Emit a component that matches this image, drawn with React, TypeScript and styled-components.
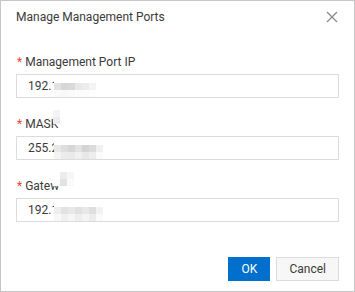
import styled, { createGlobalStyle } from "styled-components"

const GlobalStyle = createGlobalStyle`
  html, body {
    margin: 0;
    padding: 0;
    background: #ffffff;
  }
  body {
    font-family: Roboto, "Liberation Sans", sans-serif;
    color: #3a3a3a;
  }
`

type Field = {
  label: string
  value: string
  labelBlur: number[][]
  valueBlur: number[][]
}

// rough greys for the redacted (pixelated) parts of the screenshot
const fields: Field[] = [
  {
    label: "Management Port IP",
    value: "192.1",
    labelBlur: [],
    valueBlur: [
      [255, 255, 255, 255, 255, 255, 255],
      [226, 214, 218, 232, 236, 244, 255],
      [250, 248, 250, 252, 252, 254, 255],
    ],
  },
  {
    label: "MASK",
    value: "255.2",
    labelBlur: [[244], [236]],
    valueBlur: [
      [255, 255, 255, 255, 255, 255, 255],
      [232, 222, 214, 226, 212, 220, 240],
      [244, 236, 234, 240, 232, 238, 250],
    ],
  },
  {
    label: "Gatew",
    value: "192.1",
    labelBlur: [[255, 236, 246], [252, 226, 250]],
    valueBlur: [
      [255, 255, 255, 255, 255, 255, 255],
      [238, 226, 232, 224, 232, 222, 242],
      [248, 240, 246, 238, 244, 236, 250],
    ],
  },
]

const Mosaic = ({ cells, size = 7 }: { cells: number[][]; size?: number }) => {
  const w = (cells[0]?.length ?? 0) * size
  const h = cells.length * size
  return (
    <svg width={w} height={h} viewBox={`0 0 ${w} ${h}`} style={{ display: "block" }}>
      {cells.map((row, r) =>
        row.map((g, c) => (
          <rect
            key={`${r}-${c}`}
            x={c * size}
            y={r * size}
            width={size}
            height={size}
            fill={`rgb(${g},${g},${g})`}
          />
        ))
      )}
    </svg>
  )
}

export default function App() {
  return (
    <>
      <GlobalStyle />
      <Dialog>
        <Header>
          <Title>Manage Management Ports</Title>
          <CloseButton aria-label="Close">
            <svg width="12" height="12" viewBox="0 0 12 12">
              <path d="M1 1 L11 11 M11 1 L1 11" stroke="#8a8a8a" strokeWidth="1.3" fill="none" />
            </svg>
          </CloseButton>
        </Header>
        <Body>
          {fields.map((f) => (
            <FormItem key={f.label}>
              <Label>
                <Required>*</Required>
                <span>{f.label}</span>
                {f.labelBlur.length > 0 && (
                  <LabelBlur>
                    <Mosaic cells={f.labelBlur} />
                  </LabelBlur>
                )}
              </Label>
              <InputBox>
                <span>{f.value}</span>
                <ValueBlur>
                  <Mosaic cells={f.valueBlur} />
                </ValueBlur>
              </InputBox>
            </FormItem>
          ))}
        </Body>
        <Footer>
          <Button $primary>OK</Button>
          <Button>Cancel</Button>
        </Footer>
      </Dialog>
    </>
  )
}

const Dialog = styled.div`
  box-sizing: border-box;
  width: 355px;
  height: 292px;
  border: 1px solid #c6c6c6;
  background: #ffffff;
  display: flex;
  flex-direction: column;
`

const Header = styled.div`
  display: flex;
  align-items: center;
  justify-content: space-between;
  height: 32px;
  padding: 0 15px;
`

const Title = styled.div`
  font-size: 12px;
  color: #3a3a3a;
`

const CloseButton = styled.button`
  border: none;
  background: none;
  padding: 0;
  width: 12px;
  height: 12px;
  display: flex;
  cursor: pointer;
  margin-right: 1px;
`

const Body = styled.div`
  display: flex;
  flex-direction: column;
  gap: 16px;
  padding: 19px 15px 0;
`

const FormItem = styled.div`
  display: flex;
  flex-direction: column;
  gap: 2px;
`

const Label = styled.div`
  position: relative;
  display: flex;
  align-items: center;
  height: 20px;
  font-size: 12px;
  color: #3a3a3a;
`

const Required = styled.span`
  color: #e84738;
  margin: 0 3px 0 1px;
`

const LabelBlur = styled.div`
  position: absolute;
  left: 37px;
  top: -4px;
`

const InputBox = styled.div`
  position: relative;
  box-sizing: border-box;
  height: 24px;
  border: 1px solid #dcdcdc;
  padding: 0 11px;
  display: flex;
  align-items: center;
  font-size: 12px;
  color: #3a3a3a;
`

const ValueBlur = styled.div`
  position: absolute;
  left: 37px;
  top: 1px;
`

const Footer = styled.div`
  margin-top: auto;
  display: flex;
  justify-content: flex-end;
  gap: 6px;
  padding: 0 15px 10px;
`

const Button = styled.button<{ $primary?: boolean }>`
  box-sizing: border-box;
  height: 24px;
  min-width: ${(p) => (p.$primary ? "42px" : "60px")};
  padding: 0 12px;
  font-family: Roboto, "Liberation Sans", sans-serif;
  font-size: 12px;
  border: 1px solid ${(p) => (p.$primary ? "#0070cc" : "#dcdcdc")};
  background: ${(p) => (p.$primary ? "#0070cc" : "#f7f7f7")};
  color: ${(p) => (p.$primary ? "#ffffff" : "#3a3a3a")};
  cursor: pointer;
`
